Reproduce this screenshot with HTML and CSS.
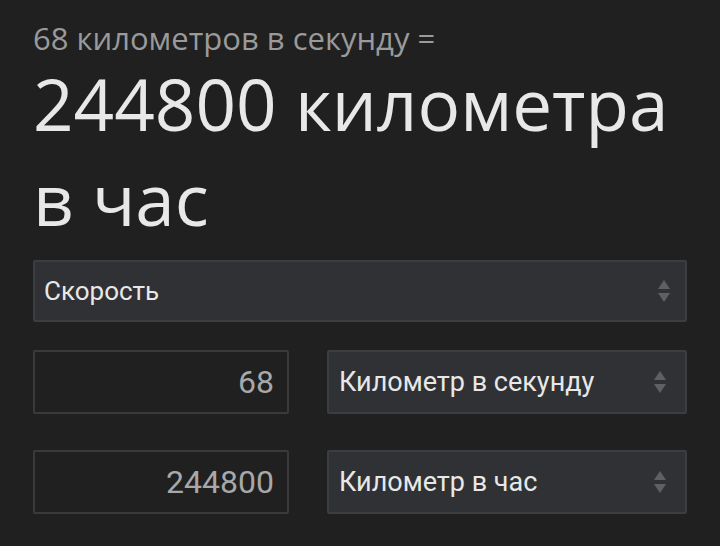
FILE: index.html
```html
<!DOCTYPE html>
<html lang="ru">
<head>
  <meta charset="UTF-8">
  <meta name="viewport" content="width=device-width, initial-scale=1">
  <title>Конвертер величин</title>
  <link rel="stylesheet" href="styles.css">
</head>
<body>
  <div class="converter">
    <div class="summary">68 километров в секунду =</div>
    <div class="answer">244800 километра в час</div>

    <div class="select wide">
      <span>Скорость</span>
      <i class="arrows"></i>
    </div>

    <div class="row">
      <div class="field">68</div>
      <div class="select">
        <span>Километр в секунду</span>
        <i class="arrows"></i>
      </div>
    </div>

    <div class="row">
      <div class="field">244800</div>
      <div class="select">
        <span>Километр в час</span>
        <i class="arrows"></i>
      </div>
    </div>
  </div>
</body>
</html>
```

FILE: styles.css
```css
body { margin: 0; background: #202020; font-family: Roboto, "Noto Sans", sans-serif; }
.converter { padding: 20px 33px 0 33px; width: 654px; }
.summary { color: #9a9a9a; font-family: "Open Sans", sans-serif; font-size: 31px; line-height: 36px; }
.answer { color: #e8e8e8; font-family: "Open Sans", sans-serif; font-size: 71px; line-height: 95px; margin-top: 0; }
.select { display: flex; align-items: center; justify-content: space-between; background: #303134; border: 2px solid #3c3d40; border-radius: 2px; padding: 0 18px 0 10px; color: #e8e8e8; font-size: 27px; box-sizing: border-box; height: 64px; }
.select.wide { margin-top: 14px; height: 62px; padding-left: 9px; padding-right: 14px; font-size: 26px; }
.row { display: flex; gap: 38px; margin-top: 28px; }
.row .select { flex: 1; }
.field { width: 256px; height: 64px; box-sizing: border-box; border: 2px solid #3a3a3a; border-radius: 2px; color: #a8a8a8; font-size: 32px; text-align: right; padding-right: 13px; line-height: 60px; }
.row + .row { margin-top: 36px; }
.arrows { position: relative; width: 13px; height: 22px; }
.arrows::before, .arrows::after { content: ""; position: absolute; left: 0; border-left: 6.5px solid transparent; border-right: 6.5px solid transparent; }
.arrows::before { top: 0; border-bottom: 9px solid #5f6064; }
.arrows::after { bottom: 0; border-top: 9px solid #5f6064; }
```
